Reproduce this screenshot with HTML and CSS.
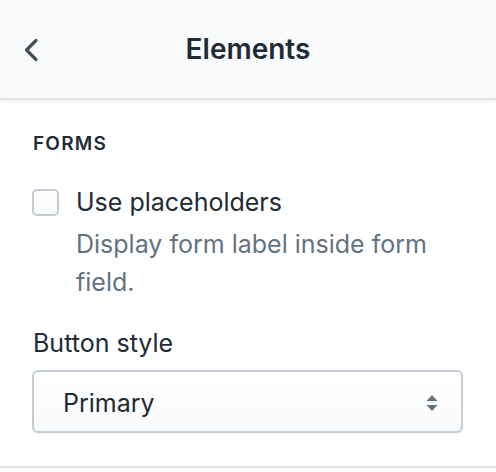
FILE: index.html
```html
<!DOCTYPE html>
<html>
<head>
<meta charset="utf-8">
<link rel="stylesheet" href="styles.css">
</head>
<body>
<div class="panel">
  <header class="topbar">
    <button class="back" aria-label="Back">
      <svg width="16" height="24" viewBox="0 0 16 24"><path d="M13 2.5 L3.5 12 L13 21.5" fill="none" stroke="#454f5b" stroke-width="3.2" stroke-linecap="round" stroke-linejoin="round"/></svg>
    </button>
    <h1 class="title">Elements</h1>
  </header>
  <section class="section">
    <h2 class="section-title">FORMS</h2>
    <label class="check-row">
      <span class="checkbox"></span>
      <span class="check-label">Use placeholders</span>
    </label>
    <p class="help">Display form label inside form field.</p>
    <div class="field-label">Button style</div>
    <div class="select">
      <span class="select-value">Primary</span>
      <svg class="select-arrows" width="12" height="18" viewBox="0 0 12 18"><path d="M6 1 L11.5 7 H0.5 Z" fill="#637381"/><path d="M6 17 L11.5 11 H0.5 Z" fill="#637381"/></svg>
    </div>
  </section>
  <div class="divider"></div>
</div>
</body>
</html>
```
FILE: styles.css
```css
html, body {
  margin: 0;
  padding: 0;
  background: #ffffff;
}
body {
  font-family: Inter, "Noto Sans", "Liberation Sans", sans-serif;
  color: #212b36;
  width: 496px;
  height: 472px;
  overflow: hidden;
}
.topbar {
  position: relative;
  height: 100px;
  background: #f9fafb;
  border-bottom: 2px solid #e1e4e8;
  box-shadow: 0 2px 5px rgba(0, 0, 0, 0.06);
  display: flex;
  align-items: center;
  justify-content: center;
  box-sizing: border-box;
}
.back {
  position: absolute;
  left: 22px;
  top: 37px;
  border: 0;
  background: none;
  padding: 0;
  width: 18px;
  height: 26px;
  display: flex;
  align-items: center;
  justify-content: center;
}
.title {
  margin: 0;
  font-size: 28px;
  font-weight: 600;
  color: #212b36;
  letter-spacing: 0;
}
.section {
  padding: 32px 33px 33px 32px;
}
.section-title {
  margin: 0 0 0 1px;
  font-size: 19px;
  line-height: 24px;
  font-weight: 600;
  letter-spacing: 1.2px;
  color: #212b36;
}
.check-row {
  display: flex;
  align-items: center;
  gap: 17px;
  margin-top: 31px;
}
.checkbox {
  width: 27px;
  height: 27px;
  box-sizing: border-box;
  border: 2px solid #c4cdd5;
  border-radius: 5px;
  background: linear-gradient(#ffffff, #f9fafb);
  flex: none;
}
.check-label {
  font-size: 25px;
  line-height: 30px;
  color: #212b36;
}
.help {
  margin: 8px 0 0 44px;
  font-size: 25px;
  line-height: 38px;
  color: #637381;
  width: 380px;
}
.field-label {
  margin-top: 26px;
  margin-left: 1px;
  font-size: 25px;
  line-height: 32px;
  color: #212b36;
}
.select {
  margin-top: 11px;
  height: 63px;
  box-sizing: border-box;
  border: 2px solid #c4cdd5;
  border-radius: 6px;
  background: linear-gradient(#ffffff, #f9fafb);
  box-shadow: 0 1px 0 rgba(22, 29, 37, 0.05);
  display: flex;
  align-items: center;
  justify-content: space-between;
  padding: 3px 23px 0 29px;
}
.select-value {
  font-size: 25px;
  color: #212b36;
}
.divider {
  border-top: 2px solid #e1e4e8;
}
```
